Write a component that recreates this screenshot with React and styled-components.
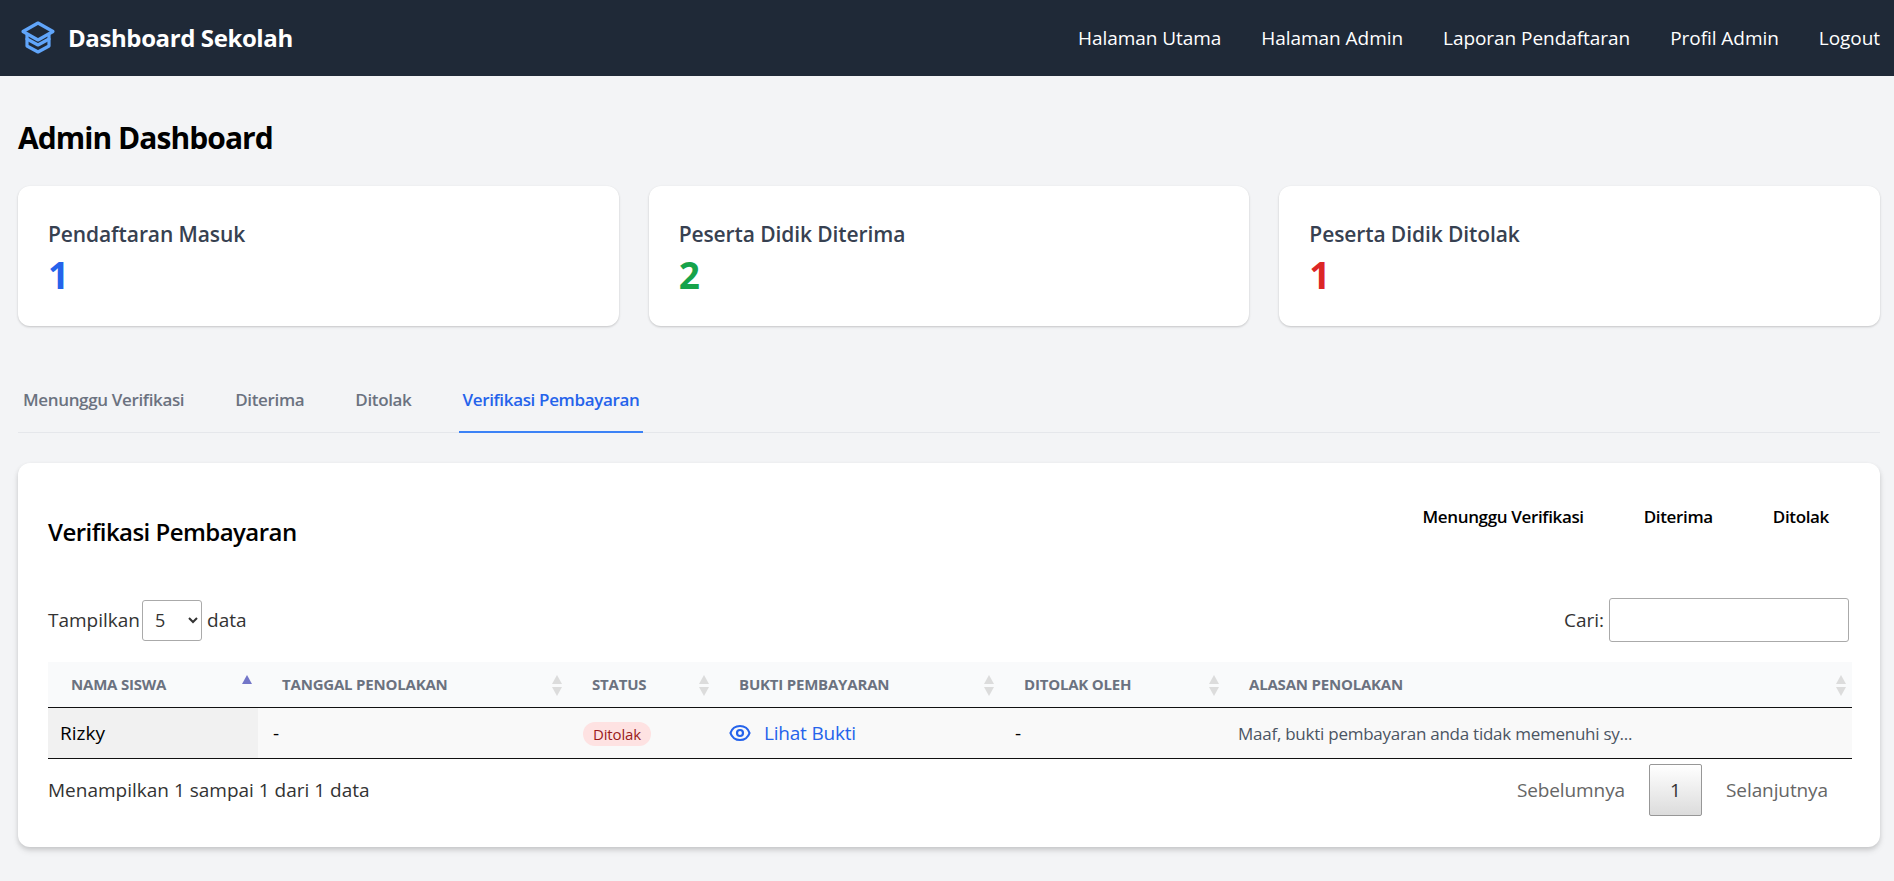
import styled, { createGlobalStyle } from "styled-components";

const Global = createGlobalStyle`
* { box-sizing: border-box; }
body {
  margin: 0;
  background: #f3f4f6;
  font-family: "Open Sans", "Noto Sans", sans-serif;
  color: #000;
}
`;

const Header = styled.header`
height: 76px;
background: #1f2937;
display: flex;
align-items: center;
justify-content: space-between;
padding: 0 14px 0 20px;
`;

const Brand = styled.div`
display: flex;
align-items: center;
gap: 12px;
margin-bottom: 2px;
color: #fff;
font-size: 24px;
font-weight: 700;
letter-spacing: -0.4px;
`;

const Logo = styled.svg`
width: 36px;
height: 34px;
fill: none;
stroke: #60a5fa;
stroke-width: 3.2;
stroke-linejoin: round;
stroke-linecap: round;
`;

const Nav = styled.nav`
display: flex;
gap: 40px;
`;

const NavLink = styled.a`
color: #fff;
font-size: 19px;
letter-spacing: -0.05px;
`;

const Main = styled.main`
padding: 42px 14px 35px 18px;
`;

const Title = styled.h1`
margin: 0 0 28px;
font-size: 30px;
line-height: 40px;
font-weight: 700;
letter-spacing: -0.95px;
`;

const Stats = styled.section`
display: grid;
grid-template-columns: repeat(3, 1fr);
gap: 30px;
`;

const StatCard = styled.div`
height: 140px;
padding: 34px 30px 0;
background: #fff;
border-radius: 12px;
box-shadow: 0 1px 3px rgba(0, 0, 0, 0.1), 0 1px 2px rgba(0, 0, 0, 0.1);
`;

const StatLabel = styled.div`
font-size: 21px;
line-height: 28px;
font-weight: 600;
color: #374151;
letter-spacing: -0.1px;
`;

const StatValue = styled.div`
margin-top: 5px;
font-size: 37px;
line-height: 44px;
font-weight: 700;
color: ${(p) => p.$color};
`;

const Tabs = styled.div`
display: flex;
gap: 43px;
margin-top: 48px;
height: 59px;
padding-left: 1px;
border-bottom: 1px solid #e5e7eb;
`;

const Tab = styled.button`
border: 0;
background: none;
height: 59px;
padding: 0 4px 6px;
font: 600 17px "Open Sans", sans-serif;
letter-spacing: -0.35px;
color: ${(p) => (p.$active ? "#2563eb" : "#6b7280")};
border-bottom: 2px solid ${(p) => (p.$active ? "#3b82f6" : "transparent")};
`;

const Panel = styled.section`
margin-top: 30px;
padding: 30px 28px 31px 30px;
background: #fff;
border-radius: 12px;
box-shadow: 0 4px 6px rgba(0, 0, 0, 0.1), 0 2px 4px rgba(0, 0, 0, 0.1);
`;

const PanelHead = styled.div`
display: flex;
justify-content: space-between;
align-items: flex-start;
height: 105px;
`;

const PanelTitle = styled.h2`
margin: 23px 0 0;
font-size: 24px;
line-height: 32px;
font-weight: 600;
letter-spacing: -0.55px;
`;

const SubTabs = styled.div`
display: flex;
gap: 12px;
margin-right: -1px;
`;

const SubTab = styled.button`
border: 0;
background: none;
height: 46px;
padding: 0 24px;
font: 600 17px "Open Sans", sans-serif;
letter-spacing: -0.35px;
color: #000;
`;

const Controls = styled.div`
display: flex;
justify-content: space-between;
align-items: center;
height: 44px;
padding-right: 3px;
font-size: 19px;
color: #333;
`;

const Label = styled.label`
display: flex;
align-items: center;
gap: 5px;
`;

const Select = styled.select`
width: 60px;
height: 41px;
margin-left: -3px;
padding: 0 4px 0 8px;
background: #fff;
border: 1px solid #aaa;
border-radius: 3px;
font: 18px "Open Sans", sans-serif;
color: #333;
`;

const Search = styled.input`
width: 240px;
height: 44px;
border: 1px solid #aaa;
border-radius: 3px;
background: #fff;
`;

const Table = styled.table`
width: 100%;
margin-top: 20px;
border-collapse: collapse;
table-layout: fixed;
`;

const Th = styled.th`
position: relative;
height: 45px;
padding: 0 24px;
background: #f9fafb;
border-bottom: 1px solid #111;
text-align: left;
font-size: 15px;
font-weight: 700;
text-transform: uppercase;
color: #6b7280;
letter-spacing: -0.2px;
white-space: nowrap;
&:first-child { padding-left: 23px; }
`;

const Arrows = styled.span`
position: absolute;
right: 6px;
top: 13px;
display: flex;
flex-direction: column;
gap: 3px;
&::before, &::after {
  content: "";
  border-left: 5px solid transparent;
  border-right: 5px solid transparent;
}
&::before { border-bottom: 9px solid ${(p) => (p.$asc ? "#7376c8" : "#dcdcdc")}; }
&::after { border-top: 9px solid ${(p) => (p.$asc ? "transparent" : "#dcdcdc")}; }
`;

const Td = styled.td`
height: 51px;
padding: 0 15px;
background: ${(p) => (p.$sorted ? "#f1f1f1" : "#f9f9f9")};
border-bottom: 1px solid #111;
font-size: 19px;
&:first-child { padding-left: 12px; }
`;

const Badge = styled.span`
display: inline-block;
padding: 2px 10px;
border-radius: 999px;
background: #fee2e2;
color: #991b1b;
font-size: 15px;
font-weight: 500;
letter-spacing: -0.15px;
`;

const ProofLink = styled.a`
display: inline-flex;
align-items: center;
gap: 12px;
vertical-align: middle;
color: #2563eb;
letter-spacing: -0.2px;
`;

const EyeIcon = styled.svg`
width: 24px;
height: 24px;
margin-left: -2px;
fill: none;
stroke: currentColor;
stroke-width: 2.2;
stroke-linejoin: round;
stroke-linecap: round;
`;

const Reason = styled.span`
margin-left: -2px;
font-size: 17px;
color: #4b5563;
letter-spacing: -0.25px;
white-space: nowrap;
`;

const Footer = styled.div`
display: flex;
justify-content: space-between;
align-items: center;
padding: 5px 0 0;
font-size: 19px;
color: #333;
`;

const Pager = styled.div`
display: flex;
align-items: center;
`;

const PageLink = styled.a`
padding: 0 24px;
color: #666;
letter-spacing: -0.1px;
`;

const PageNumber = styled.span`
display: flex;
align-items: center;
justify-content: center;
width: 53px;
height: 52px;
border: 1px solid #979797;
border-radius: 2px;
background: linear-gradient(to bottom, #fff 0%, #dcdcdc 100%);
color: #333;
`;

const cols = [210, 310, 147, 285, 225, 627];
const heads = ["Nama Siswa", "Tanggal Penolakan", "Status", "Bukti Pembayaran", "Ditolak Oleh", "Alasan Penolakan"];

export default function App() {
  return (
    <>
      <Global />
      <Header>
        <Brand>
          <Logo viewBox="0 0 36 34">
            <path d="M18 3 L33 11.5 L18 20 L3 11.5 Z" />
            <path d="M7 15 V26 L18 32 L29 26 V15" />
            <path d="M7 19 L18 25 L29 19" />
          </Logo>
          Dashboard Sekolah
        </Brand>
        <Nav>
          <NavLink>Halaman Utama</NavLink>
          <NavLink>Halaman Admin</NavLink>
          <NavLink>Laporan Pendaftaran</NavLink>
          <NavLink>Profil Admin</NavLink>
          <NavLink>Logout</NavLink>
        </Nav>
      </Header>
      <Main>
        <Title>Admin Dashboard</Title>
        <Stats>
          <StatCard>
            <StatLabel>Pendaftaran Masuk</StatLabel>
            <StatValue $color="#2563eb">1</StatValue>
          </StatCard>
          <StatCard>
            <StatLabel>Peserta Didik Diterima</StatLabel>
            <StatValue $color="#16a34a">2</StatValue>
          </StatCard>
          <StatCard>
            <StatLabel>Peserta Didik Ditolak</StatLabel>
            <StatValue $color="#dc2626">1</StatValue>
          </StatCard>
        </Stats>
        <Tabs>
          <Tab>Menunggu Verifikasi</Tab>
          <Tab>Diterima</Tab>
          <Tab>Ditolak</Tab>
          <Tab $active>Verifikasi Pembayaran</Tab>
        </Tabs>
        <Panel>
          <PanelHead>
            <PanelTitle>Verifikasi Pembayaran</PanelTitle>
            <SubTabs>
              <SubTab>Menunggu Verifikasi</SubTab>
              <SubTab>Diterima</SubTab>
              <SubTab>Ditolak</SubTab>
            </SubTabs>
          </PanelHead>
          <Controls>
            <Label>
              Tampilkan
              <Select defaultValue="5">
                <option>5</option>
              </Select>
              data
            </Label>
            <Label>
              Cari:
              <Search />
            </Label>
          </Controls>
          <Table>
            <colgroup>
              {cols.map((w, i) => (
                <col key={i} style={{ width: w }} />
              ))}
            </colgroup>
            <thead>
              <tr>
                {heads.map((h, i) => (
                  <Th key={h}>
                    {h}
                    <Arrows $asc={i === 0} />
                  </Th>
                ))}
              </tr>
            </thead>
            <tbody>
              <tr>
                <Td $sorted>Rizky</Td>
                <Td>-</Td>
                <Td>
                  <Badge>Ditolak</Badge>
                </Td>
                <Td>
                  <ProofLink>
                    <EyeIcon viewBox="0 0 24 24">
                      <path d="M2.458 12C3.732 7.943 7.523 5 12 5c4.478 0 8.268 2.943 9.542 7-1.274 4.057-5.064 7-9.542 7-4.477 0-8.268-2.943-9.542-7z" />
                      <path d="M15 12a3 3 0 11-6 0 3 3 0 016 0z" />
                    </EyeIcon>
                    Lihat Bukti
                  </ProofLink>
                </Td>
                <Td>-</Td>
                <Td>
                  <Reason>Maaf, bukti pembayaran anda tidak memenuhi sy...</Reason>
                </Td>
              </tr>
            </tbody>
          </Table>
          <Footer>
            <span>Menampilkan 1 sampai 1 dari 1 data</span>
            <Pager>
              <PageLink>Sebelumnya</PageLink>
              <PageNumber>1</PageNumber>
              <PageLink>Selanjutnya</PageLink>
            </Pager>
          </Footer>
        </Panel>
      </Main>
    </>
  );
}
